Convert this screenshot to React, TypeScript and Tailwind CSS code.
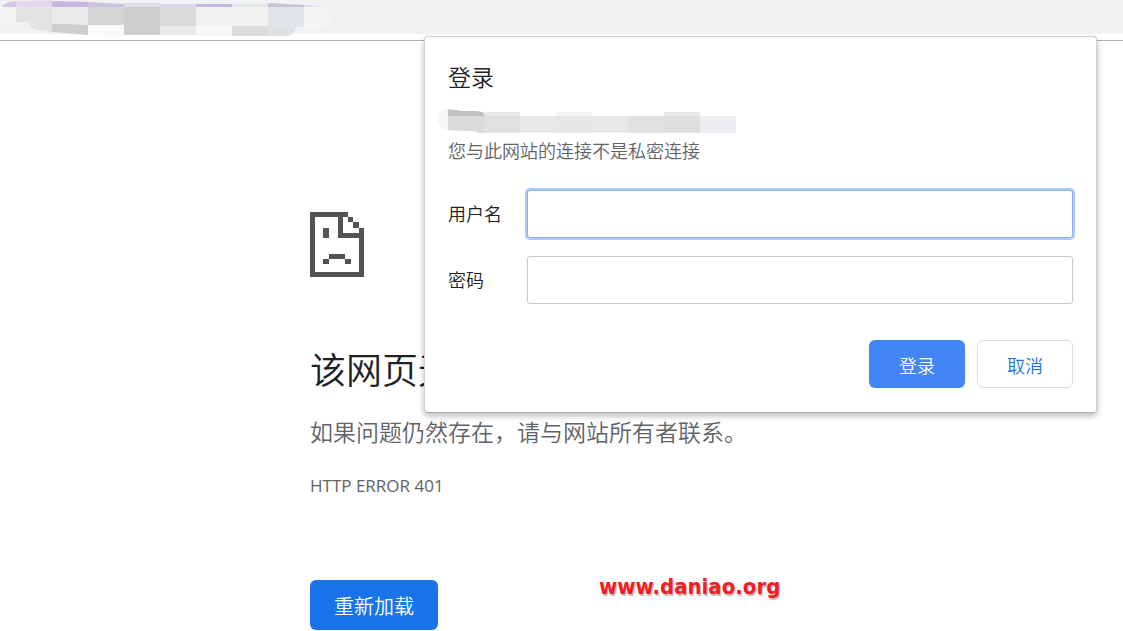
import React from 'react';

type Tile = [x: number, y: number, width: number, height: number, fill: string];

const toolbarTiles: Tile[] = [
  [16, 7, 36, 15, '#e1e3e5'],
  [52, 7, 36, 17, '#ebebec'],
  [88, 7, 36, 18, '#d4d5d7'],
  [124, 7, 36, 28, '#cdced0'],
  [160, 7, 36, 19, '#dadbdd'],
  [160, 26, 36, 9, '#e8e9ea'],
  [196, 7, 36, 19, '#f2f2f2'],
  [196, 26, 36, 10, '#f5f7f9'],
  [232, 7, 36, 19, '#f2f2f2'],
  [232, 26, 36, 10, '#dbdcdd'],
  [268, 7, 36, 20, '#e1e5e7'],
  [124, 3, 36, 4, '#dddfe2'],
  [160, 4, 36, 3, '#dfd8ed'],
  [196, 4, 36, 3, '#c5b6dd'],
  [232, 4, 36, 3, '#e0e5e6'],
];

const siteTiles: Tile[] = [
  [47, 3, 36, 4, '#e8e8e8'],
  [47, 7, 36, 17, '#e0e0e0'],
  [83, 7, 36, 17, '#e8e8e8'],
  [119, 3, 36, 4, '#f3f3f3'],
  [119, 7, 36, 17, '#e7e7e7'],
  [155, 7, 36, 17, '#e8e8e8'],
  [191, 7, 36, 17, '#e1e1e1'],
  [227, 3, 36, 4, '#e7e7e7'],
  [227, 7, 36, 17, '#dfdfdf'],
  [263, 7, 36, 17, '#eceef1'],
];

function Tiles({ tiles }: { tiles: Tile[] }) {
  return (
    <>
      {tiles.map(([x, y, width, height, fill]) => (
        <rect key={`${x}-${y}`} x={x} y={y} width={width} height={height} fill={fill} />
      ))}
    </>
  );
}

function MaskedAddress() {
  return (
    <svg width="340" height="38" viewBox="0 0 340 38" className="block" aria-hidden="true">
      <path d="M2 7H16V22H8Q0 21 0 14Z" fill="#f3f4f6" />
      <path d="M304 6L321 7Q332 10 331 17Q330 27 320 27H304Z" fill="#f4f5f7" />
      <path d="M28 22H52V32L38 30Q30 29 28 22Z" fill="#e1e3e5" />
      <path d="M52 23L88 25V35L52 32Z" fill="#cdced0" />
      <path d="M88 24L124 25V36L88 35Z" fill="#f9f9f9" />
      <path d="M268 27H296Q293 36 286 36H268Z" fill="#dfe1e2" />
      <path d="M2 7Q5 2 16 1V7Z" fill="#d4c5e9" />
      <path d="M16 1L52 0V7H16Z" fill="#e0d9ee" />
      <path d="M52 1L88 2V7H52Z" fill="#c4b6dc" />
      <path d="M88 2L124 4V7H88Z" fill="#cdc3e1" />
      <Tiles tiles={toolbarTiles} />
      <path d="M268 3L304 5V7H268Z" fill="#c9bddc" />
      <path d="M304 5L324 7H304Z" fill="#dfd6ec" />
    </svg>
  );
}

function MaskedSite() {
  return (
    <svg width="299" height="26" viewBox="0 0 299 26" className="-ml-[11px] block" aria-hidden="true">
      <path d="M11 0Q0 1 0 10Q0 20 11 21Z" fill="#f6f6f6" />
      <path d="M11 7H47V24H41L36 22Q20 22 11 21Z" fill="#dadcdb" />
      <path d="M11 0L26 2H38Q44 2 47 4V7H11Z" fill="#c1c1c1" />
      <Tiles tiles={siteTiles} />
    </svg>
  );
}

function SadPage() {
  return (
    <svg
      width="54"
      height="65"
      viewBox="0 0 54 65"
      className="block"
      fill="#535353"
      shapeRendering="crispEdges"
      aria-hidden="true"
    >
      <path d="M0 0H38V5H33V21H54V65H0ZM5 5V60H49V26H28V5Z" fillRule="evenodd" />
      <path d="M38 5h5v5h-5zM43 10h6v6h-6zM49 16h5v6h-5z" />
      <path d="M13 16h6v10h-6zM19 42h16v5H19zM13 47h6v5h-6zM35 47h6v5h-6z" />
    </svg>
  );
}

function LoginDialog() {
  return (
    <div
      role="dialog"
      aria-labelledby="login-title"
      className="absolute top-9 right-[26px] w-[673px] rounded border border-[#cfcfcf] border-b-[#b0b0b0] bg-white px-[23px] pt-6 pb-6 text-lg leading-6 font-[350] shadow-[0_3px_6px_rgba(0,0,0,0.28)]"
    >
      <h2 id="login-title" className="mb-4 text-[23px] leading-8 text-[#202124]">
        登录
      </h2>
      <MaskedSite />
      <p className="mt-1 text-[#5f6368]">您与此网站的连接不是私密连接</p>
      <form onSubmit={(event) => event.preventDefault()}>
        <div className="mt-[27px] grid grid-cols-[79px_1fr] items-center gap-y-[18px] text-[#202124]">
          <label htmlFor="username">用户名</label>
          <input
            id="username"
            type="text"
            className="h-12 min-w-0 rounded-[3px] border border-[#8fb0e6] bg-white px-3 shadow-[0_0_0_2px_#aecbfa] outline-none"
          />
          <label htmlFor="password">密码</label>
          <input
            id="password"
            type="password"
            className="h-12 min-w-0 rounded-[3px] border border-[#c8c8c8] bg-white px-3 outline-none"
          />
        </div>
        <div className="mt-9 flex justify-end gap-3">
          <button type="submit" className="h-12 w-24 rounded-md bg-[#4285f4] pt-1 text-white">
            登录
          </button>
          <button type="button" className="h-12 w-24 rounded-md border border-[#dadce0] bg-white pt-1 text-[#1a73e8]">
            取消
          </button>
        </div>
      </form>
    </div>
  );
}

export default function App() {
  return (
    <div className="relative min-h-screen bg-white font-['Open_Sans','Noto_Sans_CJK_SC',sans-serif]">
      <header className="h-[41px] border-b border-[#b0b0b0] bg-linear-to-b from-[#f0f2f4] from-[34px] to-white to-[34px]">
        <MaskedAddress />
      </header>
      <main className="mx-auto max-w-[503px] pt-[171px]">
        <SadPage />
        <h1 className="mt-[70px] text-4xl leading-[48px] font-[350] text-[#202124]">该网页无法正常运作</h1>
        <p className="mt-[21px] text-[23px] leading-8 font-[350] text-[#5f6368]">
          如果问题仍然存在，请与网站所有者联系。
        </p>
        <p className="mt-[26px] text-[17px] leading-6 text-[#5f6368]">HTTP ERROR 401</p>
        <button
          type="button"
          className="mt-[82px] block h-[50px] rounded-md bg-[#1a73e8] px-6 pt-1 text-xl font-[350] text-white"
        >
          重新加载
        </button>
      </main>
      <LoginDialog />
      <a
        href="#"
        className="absolute top-[571px] left-[599px] font-['DejaVu_Sans_Condensed','DejaVu_Sans',sans-serif] text-[22px] leading-8 font-bold text-[#f41c24] [text-shadow:1px_2px_1px_#bbb]"
      >
        www.daniao.org
      </a>
    </div>
  );
}
